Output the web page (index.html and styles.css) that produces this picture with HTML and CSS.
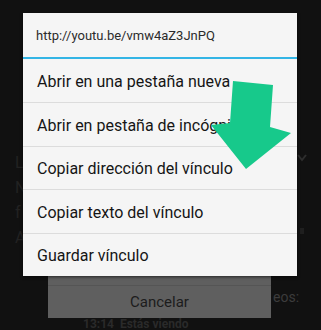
FILE: index.html
```html
<!DOCTYPE html>
<html lang="es">
<head>
    <meta charset="UTF-8">
    <meta name="viewport" content="width=device-width, initial-scale=1.0">
    <title>Menú del vínculo</title>
    <link rel="stylesheet" href="styles.css">
</head>
<body>
    <div class="screen">
        <!-- dimmed page behind the menu -->
        <div class="behind">
            <div class="faint-top">
                <div class="faint-lines">
                    <p>L</p>
                    <p>N</p>
                    <p>f</p>
                    <p>A</p>
                </div>
                <div class="faint-right">
                    <svg width="10" height="8" viewBox="0 0 10 8"><path d="M1 1 L5 6 L9 1" fill="none" stroke="#2e2e2e" stroke-width="2"/></svg>
                    <span class="dot"></span>
                </div>
            </div>
            <div class="cancel-row">
                <div class="cancel-panel">
                    <div class="cancel-sep"></div>
                    <div class="cancel-btn">Cancelar</div>
                </div>
                <span class="side-text">eos:</span>
            </div>
            <div class="status-text">13:14 &nbsp;Estás viendo</div>
        </div>

        <!-- context menu -->
        <div class="menu">
            <div class="menu-url">http://youtu.be/vmw4aZ3JnPQ</div>
            <ul class="menu-list">
                <li>Abrir en una pestaña nueva</li>
                <li>Abrir en pestaña de incógnito</li>
                <li>Copiar dirección del vínculo</li>
                <li>Copiar texto del vínculo</li>
                <li>Guardar vínculo</li>
            </ul>
        </div>

        <!-- pointer arrow -->
        <svg class="arrow" width="321" height="330" viewBox="0 0 321 330">
            <polygon points="233,81 273,85 270,127 291,133 246,169 211,125 230,123" fill="#17c98b"/>
        </svg>
    </div>
</body>
</html>
```

FILE: styles.css
```css
* {
    box-sizing: border-box;
}
body {
    margin: 0;
    background: #111;
    font-family: Roboto, 'Noto Sans', sans-serif;
}
.screen {
    position: relative;
    width: 321px;
    height: 330px;
    overflow: hidden;
    background: #111;
}
.behind {
    display: flex;
    flex-direction: column;
    height: 100%;
}
.behind > * {
    flex-shrink: 0;
}
.faint-top {
    height: 262px;
    display: flex;
    justify-content: space-between;
}
.faint-lines {
    padding: 154px 0 0 15px;
    color: #222;
    font-size: 16px;
}
.faint-lines p {
    margin: 0 0 7px;
    line-height: 18px;
}
.faint-right {
    padding: 154px 14px 0 0;
    display: flex;
    flex-direction: column;
    align-items: center;
    gap: 66px;
}
.dot {
    width: 4px;
    height: 6px;
    background: #1f1f1f;
}
.cancel-row {
    display: flex;
    align-items: flex-end;
    padding-left: 48px;
}
.cancel-panel {
    width: 223px;
    height: 56px;
    background: #5f5f5f;
    display: flex;
    flex-direction: column;
}
.cancel-sep {
    height: 24px;
    border-bottom: 1px solid #555;
}
.cancel-btn {
    flex: 1;
    display: flex;
    align-items: center;
    justify-content: center;
    color: #1c1c1c;
    font-size: 15px;
}
.side-text {
    color: #3c3c3c;
    font-size: 14px;
    margin: 0 0 13px 2px;
}
.status-text {
    padding: 0 0 0 83px;
    color: #2a2a2a;
    font-size: 12px;
    font-weight: bold;
    line-height: 12px;
    white-space: nowrap;
}
.menu {
    position: absolute;
    top: 13px;
    left: 23px;
    width: 274px;
    background: #f5f5f5;
    box-shadow: 0 1px 3px rgba(0, 0, 0, 0.6);
}
.menu-url {
    height: 46px;
    padding: 0 13px;
    display: flex;
    align-items: center;
    font-size: 13px;
    color: #2b2b2b;
    border-bottom: 2px solid #33b5e5;
}
.menu-list {
    list-style: none;
    margin: 0;
    padding: 0;
}
.menu-list li {
    height: 43.4px;
    padding: 2px 14px 0;
    display: flex;
    align-items: center;
    font-size: 16px;
    color: #151515;
    border-top: 1px solid #dcdcdc;
    white-space: nowrap;
}
.menu-list li:first-child {
    border-top: none;
}
.arrow {
    position: absolute;
    top: 0;
    left: 0;
}
```
